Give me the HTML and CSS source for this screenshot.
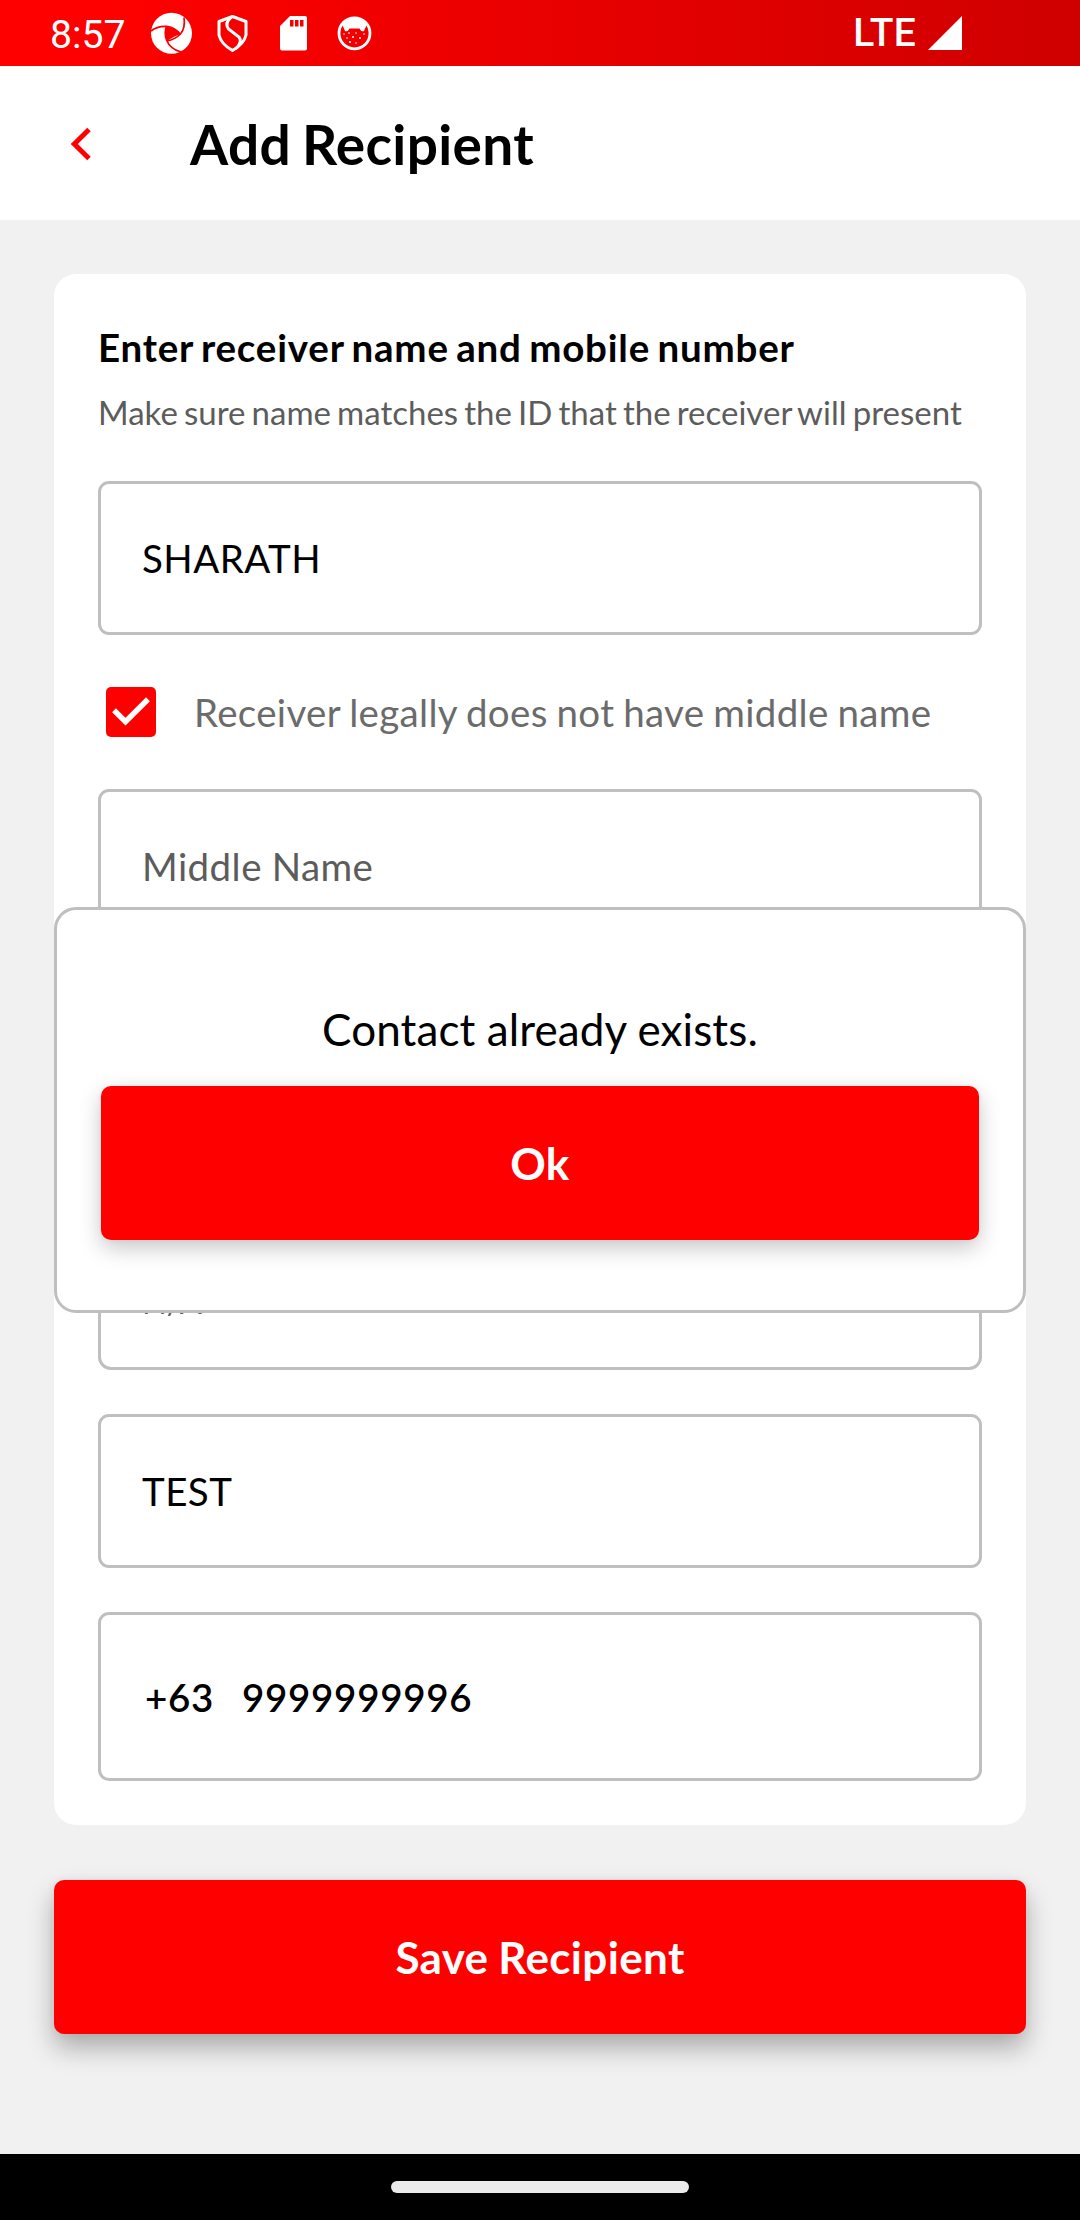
FILE: index.html
```html
<!DOCTYPE html>
<html lang="en">
<head>
<meta charset="utf-8">
<title>Add Recipient</title>
<link rel="stylesheet" href="styles.css">
</head>
<body>
<div class="screen">
  <header class="status">
    <span class="clock">8:57</span>
    <svg class="status-icons" width="232" height="66" viewBox="148 0 232 66">
      <circle cx="171.5" cy="33.3" r="20.5" fill="#fff"/>
      <path d="M166 26.5L174 28.500L180.500 34L173.500 37L167 41Q164.500 34 166 26.500Z" fill="#f80000"/>
      <g fill="none" stroke="#f80000" stroke-width="1.700">
        <path d="M151 31Q157 26 166 26.300Q175 27 180.500 34.500"/>
        <path d="M184 17.500Q185.500 28 180.500 34Q175 39.500 167 41"/>
        <path d="M181 52Q170 49 166.500 40Q164 33 166.500 26"/>
      </g>
      <path d="M232.500 16.500L246 21.500V35Q244 44 232.500 50.500Q221 44 219 35V21.500Z" fill="none" stroke="#fff" stroke-width="3" stroke-linejoin="round"/>
      <path d="M231.500 17Q224 23 228.500 29L239 37Q243 42 235.500 49" fill="none" stroke="#fff" stroke-width="3"/>
      <path fill-rule="evenodd" d="M290 16H305Q307 16 307 18V48.500Q307 50.500 305 50.500H282Q280 50.500 280 48.500V26ZM290 20V26.500H293.500V20ZM295 20V26.500H298.500V20ZM300 20V26.500H303.500V20Z" fill="#fff"/>
      <circle cx="354.500" cy="33.300" r="15.500" fill="none" stroke="#fff" stroke-width="2.800"/>
      <path d="M342 24Q354 12 367 24L364 31Q361 32 359.500 28.500H349.500Q348 32 345 31Z" fill="#fff"/>
      <g fill="#fff">
        <circle cx="344" cy="34" r=".8"/><circle cx="349" cy="33" r=".8"/><circle cx="356" cy="33" r=".8"/><circle cx="364" cy="34" r=".8"/>
        <circle cx="347" cy="38" r=".8"/><circle cx="353" cy="37" r="1"/><circle cx="360" cy="38" r="1"/><circle cx="350" cy="42" r="1"/><circle cx="356" cy="43" r=".8"/>
      </g>
    </svg>
    <span class="network">LTE</span>
    <svg class="signal" width="34" height="34" viewBox="0 0 34 34"><path d="M34 0V34H0Z" fill="#fff"/></svg>
  </header>

  <nav class="appbar">
    <svg class="back" width="22" height="34" viewBox="0 0 22 34"><path d="M19 2.500L4.300 17L19 31.500" fill="none" stroke="#f00" stroke-width="5"/></svg>
    <h1 class="title">Add Recipient</h1>
  </nav>

  <main class="content">
    <section class="card">
      <h2 class="heading">Enter receiver name and mobile number</h2>
      <p class="hint">Make sure name matches the ID that the receiver will present</p>
      <div class="field">SHARATH</div>
      <label class="check-row">
        <svg width="50" height="50" viewBox="0 0 50 50"><rect width="50" height="50" rx="5" fill="#f00"/><path d="M8 23.200L19.500 34.600L42 12.300" fill="none" stroke="#fff" stroke-width="5.500"/></svg>
        <span>Receiver legally does not have middle name</span>
      </label>
      <div class="field placeholder">Middle Name</div>
      <div class="field placeholder suffix">N/A</div>
      <div class="field">TEST</div>
      <div class="field phone"><span class="prefix">+63</span><span>9999999996</span></div>
    </section>
    <button class="btn save">Save Recipient</button>
  </main>

  <footer class="navbar"><div class="pill"></div></footer>

  <div class="dialog">
    <p class="message">Contact already exists.</p>
    <button class="btn ok">Ok</button>
  </div>
</div>
</body>
</html>
```
FILE: styles.css
```css
* { box-sizing: border-box; }
body { margin: 0; font-family: Lato, "Liberation Sans", sans-serif; color: #000; }
h1, h2, p { margin: 0; }
svg { display: block; flex: none; }

.screen { position: relative; display: flex; flex-direction: column; width: 1080px; height: 2220px; background: #f1f1f1; overflow: hidden; }

.status { display: flex; align-items: center; height: 66px; padding: 0 118px 0 50px; color: #fff; font-family: Roboto, sans-serif; background: linear-gradient(90deg, #f00 0%, #f00 8%, #cf0000 100%); }
.clock { width: 98px; padding-top: 3px; font-size: 39.2px; line-height: 46px; }
.network { margin-left: auto; margin-right: 12px; padding-bottom: 1px; font-size: 39px; line-height: 46px; font-weight: 500; letter-spacing: .2px; }

.appbar { display: flex; align-items: center; gap: 98.500px; height: 154px; padding-left: 69.500px; background: #fff; }
.back { margin-top: 2px; }
.title { padding-top: 2px; font-size: 55px; line-height: 66px; font-weight: 700; letter-spacing: .35px; word-spacing: -2.9px; }

.content { flex: 1; padding: 54px 54px 0; }
.card { height: 1551px; padding: 50px 44px 44px; border-radius: 22px; background: #fff; }
.heading { font-size: 38.5px; line-height: 46px; font-weight: 700; letter-spacing: .8px; word-spacing: -2.7px; white-space: nowrap; }
.hint { margin: 22px 0 49px; font-size: 33px; line-height: 40px; letter-spacing: .02px; word-spacing: -2.4px; color: #5c5c5c; white-space: nowrap; }
.field { display: flex; align-items: center; height: 154px; padding-left: 41px; border: 3px solid #bfbfbf; border-radius: 11px; font-size: 38.5px; line-height: 46px; letter-spacing: .45px; }
.field + .field { margin-top: 44px; }
.placeholder { color: #5c5c5c; word-spacing: -.6px; }
.field.suffix { height: 142px; margin-top: 285px; padding-top: 5px; border-radius: 13px; font-size: 32.6px; letter-spacing: 0; }
.phone { height: 169px; padding-left: 44px; font-weight: 600; letter-spacing: .7px; }
.prefix { width: 97px; }
.check-row { display: flex; align-items: center; gap: 38px; height: 154px; padding-left: 8px; font-size: 38.5px; line-height: 46px; letter-spacing: .32px; word-spacing: -1.25px; color: #6b6b6b; }

.btn { display: block; width: 100%; height: 154px; padding: 0; border: 0; border-radius: 10px; background: #f00; color: #fff; font: 700 44px/52px Lato, sans-serif; letter-spacing: .35px; word-spacing: -1.3px; }
.save { margin-top: 55px; box-shadow: 0 14px 26px rgba(0, 0, 0, .29), 0 0 8px rgba(0, 0, 0, .05); }

.navbar { display: flex; justify-content: center; align-items: center; height: 66px; background: #000; }
.pill { width: 298px; height: 12px; border-radius: 6px; background: #ebebeb; }

.dialog { position: absolute; left: 54px; top: 907px; width: 972px; height: 406px; padding: 93px 44px 0; border: 3px solid #bfbfbf; border-radius: 22px; background: #fff; text-align: center; }
.message { font-size: 44px; line-height: 52px; letter-spacing: .1px; }
.ok { margin-top: 31px; box-shadow: 0 8px 22px rgba(0, 0, 0, .22), 0 0 6px rgba(0, 0, 0, .04); }
```
